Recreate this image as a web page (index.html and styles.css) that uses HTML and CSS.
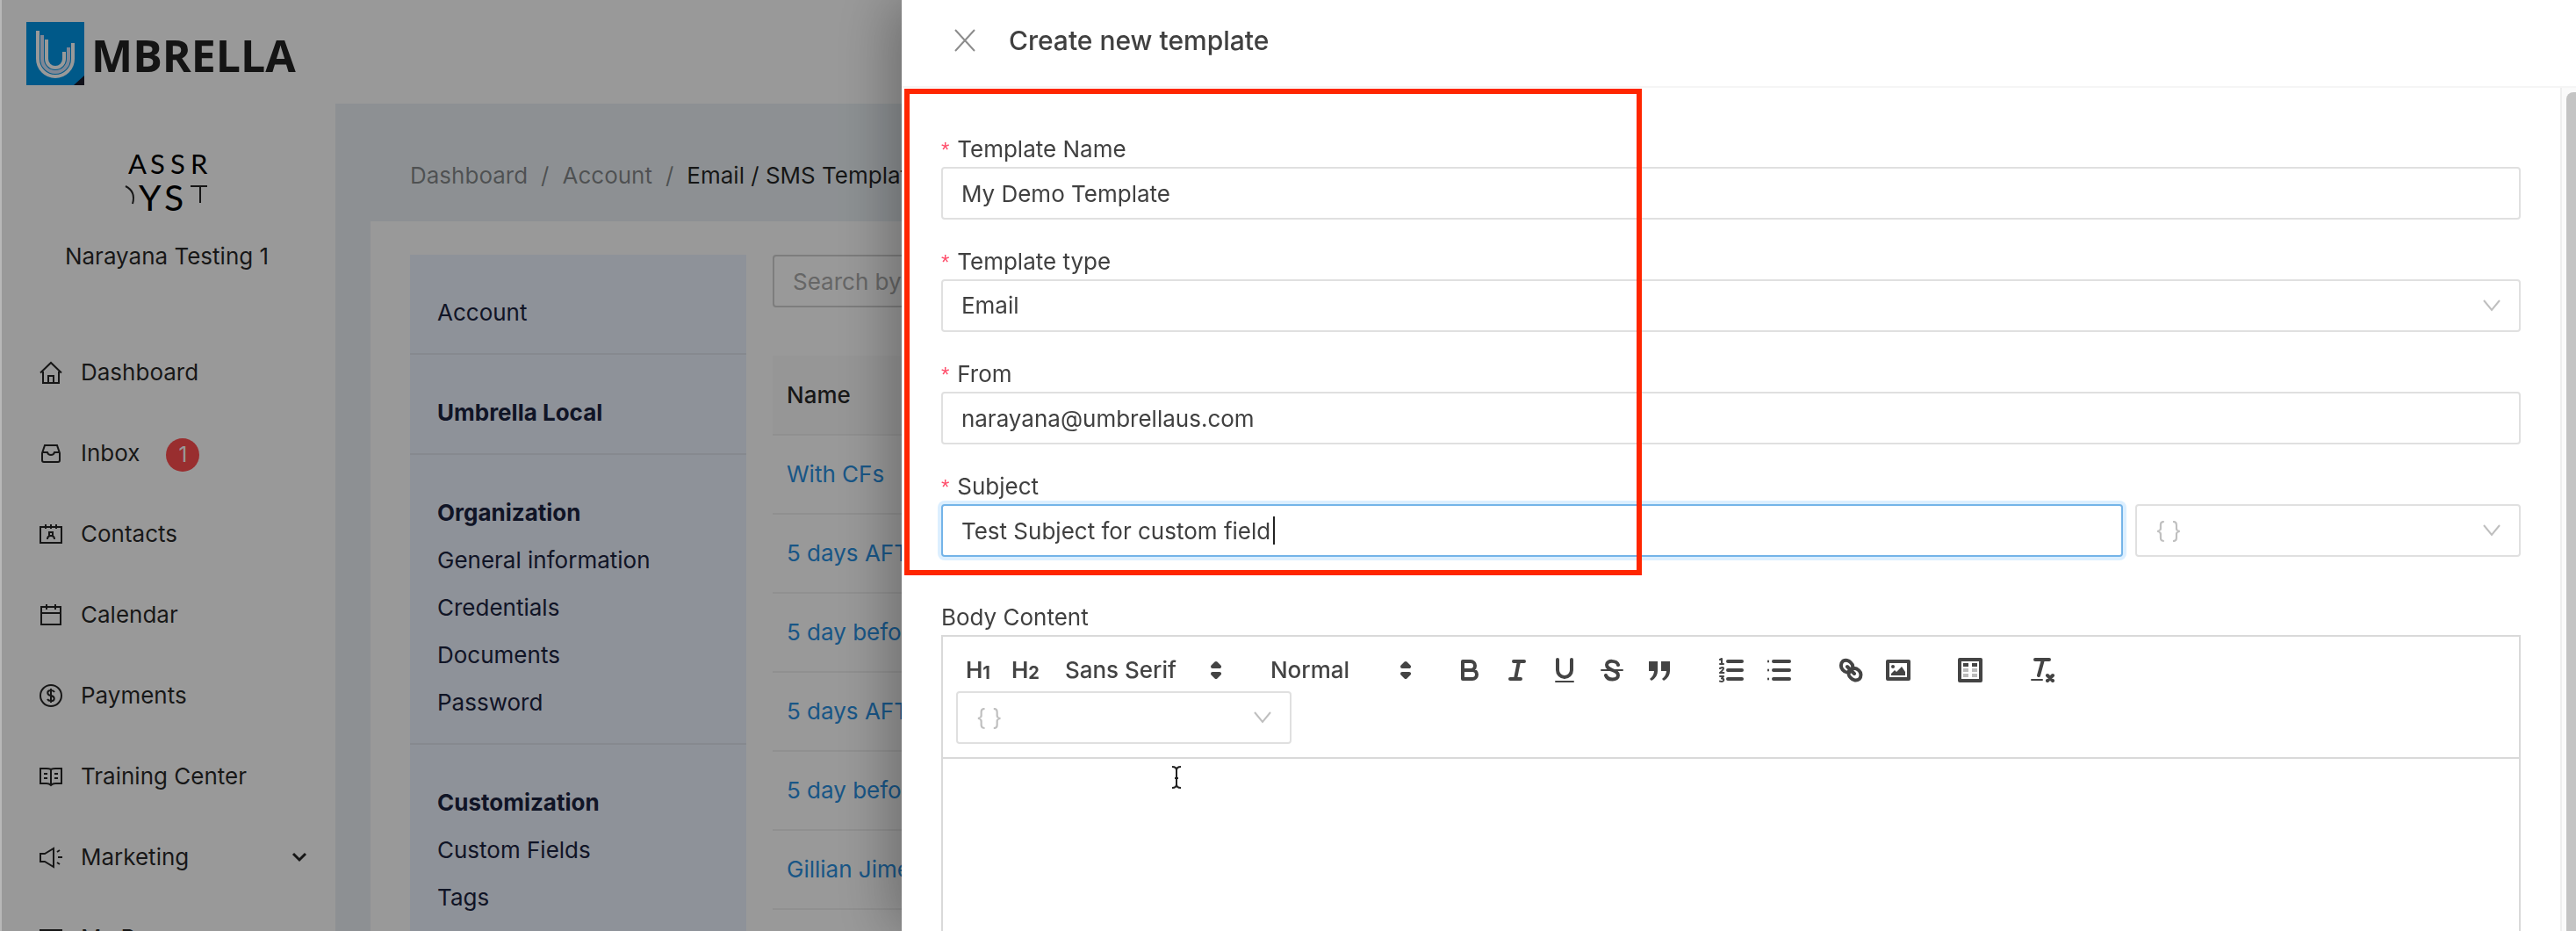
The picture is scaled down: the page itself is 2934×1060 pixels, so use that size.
FILE: index.html
```html
<!DOCTYPE html>
<html lang="en">
    <head>
        <meta charset="utf-8">
        <title>Umbrella - Email / SMS Templates</title>
        <link rel="stylesheet" href="styles.css">
    </head>
    <body>
        <div class="app">
            <header class="topbar">
                <svg class="logo-mark" viewBox="0 0 66 72">
                    <rect width="66" height="72" fill="#0095e4"/>
                    <path d="M66 61V72H54z" fill="#1d1d2c"/>
                    <g fill="none" stroke="#fff" stroke-width="4">
                        <path d="M13 10V42a20 20 0 0 0 40 0V24"/>
                        <path d="M18 15V42a15 15 0 0 0 30 0V29" stroke="#d5e2f8"/>
                        <path d="M23 20V42a10 10 0 0 0 20 0V34"/>
                    </g>
                </svg>
                <span class="logo-text">MBRELLA</span>
            </header>

            <aside class="sidebar">
                <div class="org">
                    <svg class="org-logo" viewBox="0 0 96 68" stroke="#000" stroke-width="2">
                        <text x="4" y="24" class="org-word">A</text>
                        <text x="29" y="24" class="org-word">S</text>
                        <text x="52" y="24" class="org-word">S</text>
                        <text x="75" y="24" class="org-word">R</text>
                        <path d="M1 38q12 6 8 20"/>
                        <text x="16" y="66" class="org-word-big">Y</text>
                        <text x="45" y="66" class="org-word-big">S</text>
                        <path d="M75 38h19M86 38v19"/>
                    </svg>
                    <div>Narayana Testing 1</div>
                </div>
                <nav class="nav">
                    <a href="#">
                        <svg viewBox="0 0 28 28"><path d="M2 14.500 14 3l12 11.500M5 13v13h18V13M11 26v-8h6v8"/></svg>
                        Dashboard
                    </a>
                    <a href="#">
                        <svg viewBox="0 0 28 28"><path d="M7 5h14l3 9v8a2 2 0 0 1-2 2H6a2 2 0 0 1-2-2v-8zM4 13h6c1 4 7 4 8 0h6"/></svg>
                        Inbox <span class="count">1</span>
                    </a>
                    <a href="#">
                        <svg viewBox="0 0 28 28"><path d="M2 6h24v18H2zM8 3v5M14 3v5M20 3v5M10 20q0-4 4-4t4 4M12 12h4v4h-4z"/></svg>
                        Contacts
                    </a>
                    <a href="#">
                        <svg viewBox="0 0 28 28"><path d="M3 5h22v20H3zM3 12h22M9 2v6M19 2v6"/></svg>
                        Calendar
                    </a>
                    <a href="#">
                        <svg viewBox="0 0 28 28"><circle cx="14" cy="14" r="12"/><path d="M18 10q-1-2-4-2c-5 0-5 5 0 6s5 6 0 6q-3 0-4-2M14 6v16"/></svg>
                        Payments
                    </a>
                    <a href="#">
                        <svg viewBox="0 0 28 28"><path d="M14 6q-2-1-5-1H2v17h7q3 0 5 2 2-2 5-2h7V5h-7q-3 0-5 1zv17M6 11h4M6 16h4M18 11h4M18 16h4"/></svg>
                        Training Center
                    </a>
                    <a href="#">
                        <svg viewBox="0 0 28 28"><path d="M2 10h5l10-6v21L7 19H2zM21 8l3-2M22 14h5M21 20l3 2"/></svg>
                        Marketing
                        <svg class="arrow" viewBox="0 0 18 12"><path d="m2 2 7 7 7-7"/></svg>
                    </a>
                    <a href="#">
                        <svg viewBox="0 0 28 28"><path d="M2 5h24v18H2zM2 10h24"/></svg>
                        My Pages
                    </a>
                </nav>
            </aside>

            <main class="content">
                <div class="breadcrumb">
                    <a href="#">Dashboard</a><i>/</i><a href="#">Account</a><i>/</i><span>Email / SMS Templates</span>
                </div>
                <div class="card">
                    <nav class="settings">
                        <section><a href="#">Account</a></section>
                        <section><b>Umbrella Local</b></section>
                        <section>
                            <b>Organization</b>
                            <a href="#">General information</a>
                            <a href="#">Credentials</a>
                            <a href="#">Documents</a>
                            <a href="#">Password</a>
                        </section>
                        <section>
                            <b>Customization</b>
                            <a href="#">Custom Fields</a>
                            <a href="#">Tags</a>
                        </section>
                    </nav>
                    <div class="listing">
                        <input class="search" type="text" placeholder="Search by name" aria-label="Search by name">
                        <table class="templates">
                            <thead><tr><th>Name</th></tr></thead>
                            <tbody>
                                <tr><td><a href="#">With CFs</a></td></tr>
                                <tr><td><a href="#">5 days AFTER</a></td></tr>
                                <tr><td><a href="#">5 day before</a></td></tr>
                                <tr><td><a href="#">5 days AFTER</a></td></tr>
                                <tr><td><a href="#">5 day before</a></td></tr>
                                <tr><td><a href="#">Gillian Jimenez</a></td></tr>
                            </tbody>
                        </table>
                    </div>
                </div>
            </main>
        </div>

        <div class="mask"></div>

        <div class="drawer" role="dialog" aria-labelledby="drawer-title">
            <div class="drawer-header">
                <button class="close" type="button" aria-label="Close">
                    <svg viewBox="0 0 24 26"><path d="m1 1 22 24M23 1 1 25"/></svg>
                </button>
                <h1 id="drawer-title">Create new template</h1>
            </div>
            <form class="drawer-body">
                <div class="field">
                    <label class="required" for="name">Template Name</label>
                    <input id="name" type="text" value="My Demo Template">
                </div>
                <div class="field">
                    <label class="required" for="type">Template type</label>
                    <div class="select">
                        <select id="type"><option>Email</option><option>SMS</option></select>
                        <svg viewBox="0 0 22 16"><path d="m2 2 9 11 9-11"/></svg>
                    </div>
                </div>
                <div class="field">
                    <label class="required" for="from">From</label>
                    <input id="from" type="text" value="narayana@umbrellaus.com">
                </div>
                <div class="field">
                    <label class="required" for="subject">Subject</label>
                    <div class="subject-row">
                        <div class="focused">
                            <input id="subject" type="text" value="Test Subject for custom field">
                            <span class="text-caret"></span>
                        </div>
                        <div class="select empty">
                            <select aria-label="Insert custom field in subject"><option>{ }</option></select>
                            <svg viewBox="0 0 22 16"><path d="m2 2 9 11 9-11"/></svg>
                        </div>
                    </div>
                </div>

                <div class="body-field">
                    <label class="body-label" for="body">Body Content</label>
                    <div class="toolbar">
                        <div class="tools">
                            <div class="group headings">
                                <button type="button">H<small>1</small></button>
                                <button type="button">H<small>2</small></button>
                            </div>
                            <div class="picker font">
                                <select aria-label="Font"><option>Sans Serif</option></select>
                                <svg viewBox="0 0 18 18"><path d="M7 7 9 5l2 2zM7 11l2 2 2-2z"/></svg>
                            </div>
                            <div class="picker size">
                                <select aria-label="Text size"><option>Normal</option></select>
                                <svg viewBox="0 0 18 18"><path d="M7 7 9 5l2 2zM7 11l2 2 2-2z"/></svg>
                            </div>
                            <div class="group">
                                <button type="button" aria-label="Bold"><svg viewBox="0 0 18 18"><path d="M5 4h4.500a2.500 2.500 0 0 1 0 5H5zM5 9h5.500a2.500 2.500 0 0 1 0 5H5z"/></svg></button>
                                <button type="button" aria-label="Italic"><svg viewBox="0 0 18 18"><path d="M7 4h6M5 14h6M8 14l2-10"/></svg></button>
                                <button type="button" aria-label="Underline"><svg viewBox="0 0 18 18"><path d="M5 3v6a4 4 0 0 0 8 0V3"/><path class="thin" d="M4 15.500h10"/></svg></button>
                                <button type="button" aria-label="Strike"><svg viewBox="0 0 18 18"><path class="thin" d="M3 9h12"/><path d="M12.500 6C12 3.500 6 3 6 6c0 3.500 6.500 2.500 6.500 6 0 3-6 3-7 0"/></svg></button>
                                <button type="button" aria-label="Quote"><svg viewBox="0 0 18 18"><path class="solid" d="M3 4h5v5.500q0 3.500-3.500 5.500l-1-1Q6 12 6 9.500H3zM10 4h5v5.500q0 3.500-3.500 5.500l-1-1Q13 12 13 9.500h-3z"/></svg></button>
                            </div>
                            <div class="group">
                                <button type="button" aria-label="Ordered list"><svg viewBox="0 0 18 18"><path d="M7 4h8M7 9h8M7 14h8"/><path class="thin" d="m2.500 3 1-.5v3M2.500 5.500h2M2.500 8q2-1 2 0 0 .7-2 2.500h2.200M2.500 12.500h2l-1 1.200q1.500 0 1 1.300-.5.800-2 .3"/></svg></button>
                                <button type="button" aria-label="Bullet list"><svg viewBox="0 0 18 18"><path d="M6 4h9M6 9h9M6 14h9"/><path class="thin" d="M3 3.800v.4M3 8.800v.4M3 13.800v.4"/></svg></button>
                            </div>
                            <div class="group">
                                <button type="button" aria-label="Link"><svg viewBox="0 0 18 18"><path d="m7 7 4 4M8.900 4.600a3.500 3.500 0 0 1 .4 5l-.3.200A3.500 3.500 0 0 1 4.600 9 3.500 3.500 0 0 1 4.600 3.800 3.500 3.500 0 0 1 8.900 4.600zM13.400 9a3.500 3.500 0 0 1 .5 5A3.500 3.500 0 0 1 9 13.400 3.500 3.500 0 0 1 8.200 9 3.500 3.500 0 0 1 13.400 9z"/></svg></button>
                                <button type="button" aria-label="Image"><svg viewBox="0 0 18 18"><path d="M3 4h12v10H3z"/><circle class="solid" cx="6" cy="7" r="1"/><path class="solid" d="M5 12v-1l2-2 1 1 3-3 2 3v2z"/></svg></button>
                            </div>
                            <div class="group">
                                <button type="button" aria-label="Table"><svg viewBox="0 0 18 18"><path d="M3 3h12v12H3z"/><path class="solid" d="M5 5h3v2H5zM10 5h3v2h-3z"/><path class="pale" d="M5 8h3v2H5zM10 8h3v2h-3zM5 11h3v2H5zM10 11h3v2h-3z"/></svg></button>
                            </div>
                            <div class="group">
                                <button type="button" aria-label="Clear formatting"><svg viewBox="0 0 18 18"><path d="M5 3h8M9.500 3 7 12M12 12l3 3M15 12l-3 3"/><path class="thin" d="M3 14.500h6"/></svg></button>
                            </div>
                        </div>
                        <div class="select empty">
                            <select aria-label="Insert custom field in body"><option>{ }</option></select>
                            <svg viewBox="0 0 22 16"><path d="m2 2 9 11 9-11"/></svg>
                        </div>
                    </div>
                    <textarea class="editor" id="body"></textarea>
                </div>
            </form>
            <div class="scrollbar"><div class="thumb"></div></div>
        </div>

        <div class="highlight"></div>
        <svg class="cursor" viewBox="0 0 12 26"><path d="M1 1q5 0 5 4v16q0 4-5 4M11 1q-5 0-5 4v16q0 4 5 4M4 14h4"/></svg>
    </body>
</html>
```

FILE: styles.css
```css
* {
    box-sizing: border-box;
}

body {
    background: #fff;
    color: rgba(0, 0, 0, .85);
    font-family: Inter, "Liberation Sans", sans-serif;
    font-size: 26px;
    height: 100vh;
    line-height: 40px;
    margin: 0;
    overflow: hidden;
}

a {
    color: inherit;
    text-decoration: none;
}

input, select, textarea, button {
    color: inherit;
    font: inherit;
}

svg {
    fill: none;
    flex: none;
    stroke: currentColor;
}

/* page */

.app {
    border-left: 2px solid #b8b8b8;
    display: grid;
    grid-template-columns: 380px 1fr;
    grid-template-rows: 118px 1fr;
    height: 100vh;
    overflow: hidden;
}

.topbar {
    align-items: center;
    display: flex;
    gap: 8px;
    grid-column: 1 / 3;
    padding: 4px 28px 0;
}

.logo-mark {
    height: 72px;
    stroke: none;
    width: 66px;
}

.logo-text {
    color: #222;
    font-family: "Open Sans", sans-serif;
    font-size: 50px;
    font-weight: 700;
    padding-top: 4px;
}

.org {
    padding: 56px 4px 0 0;
    text-align: center;
}

.org-logo {
    display: block;
    height: 68px;
    margin: 0 auto 30px;
    overflow: visible;
    width: 96px;
}

.org-word, .org-word-big {
    fill: #000;
    font-family: Lato, sans-serif;
    font-size: 31px;
    stroke: none;
}

.org-word-big {
    font-size: 41px;
}

.nav {
    padding: 66px 32px 0 42px;
}

.nav a {
    align-items: center;
    display: flex;
    gap: 20px;
    height: 92px;
}

.nav svg {
    height: 28px;
    stroke-width: 2;
    width: 28px;
}

.nav .arrow {
    height: 12px;
    margin-left: auto;
    stroke-width: 3;
    width: 18px;
}

.count {
    background: #ff4d4f;
    border-radius: 50%;
    color: #fff;
    font-size: 24px;
    height: 38px;
    line-height: 38px;
    margin: 4px 0 0 10px;
    text-align: center;
    width: 38px;
}

.content {
    background: #ebf1f5;
    min-width: 0;
    padding: 0 40px;
}

.breadcrumb {
    color: rgba(0, 0, 0, .45);
    height: 134px;
    line-height: 164px;
    padding-left: 45px;
    white-space: nowrap;
}

.breadcrumb i {
    font-style: normal;
    margin: 0 15px;
}

.breadcrumb span {
    color: rgba(0, 0, 0, .85);
}

.card {
    background: #fff;
    display: flex;
    gap: 30px;
    height: 100%;
    padding: 38px 45px;
}

.settings {
    background: #edf3ff;
    color: #1c2340;
    flex: none;
    width: 383px;
}

.settings section {
    border-bottom: 2px solid #e0e5ee;
    display: flex;
    flex-direction: column;
    gap: 14px;
    padding: 46px 31px 26px;
}

.settings b {
    font-weight: 700;
}

.listing {
    flex: 1;
}

.search {
    border: 2px solid #d0d0d0;
    border-radius: 4px;
    display: block;
    height: 60px;
    padding: 0 21px;
    width: 500px;
}

.search::placeholder {
    color: #aaa;
}

.templates {
    border-collapse: collapse;
    margin-top: 55px;
    width: 100%;
}

.templates th, .templates td {
    border-bottom: 2px solid #f0f0f0;
    height: 90px;
    padding: 0 16px;
    text-align: left;
}

.templates th {
    background: #fafafa;
    font-weight: 500;
}

.templates td {
    color: #2a8fe0;
}

/* drawer */

.mask {
    background: rgba(0, 0, 0, .4);
    inset: 0 0 0 2px;
    position: fixed;
}

.drawer {
    background: #fff;
    bottom: 0;
    box-shadow: -12px 0 60px rgba(0, 0, 0, .3);
    color: #404040;
    display: flex;
    flex-direction: column;
    position: fixed;
    right: 0;
    top: 0;
    width: 65%;
}

.drawer-header {
    align-items: center;
    border-bottom: 2px solid #f5f5f5;
    display: flex;
    flex: none;
    gap: 38px;
    height: 100px;
    padding: 0 60px 6px;
}

.drawer-header h1 {
    font-size: 30px;
    font-weight: 500;
    margin: 0;
}

.close {
    background: none;
    border: 0;
    color: #8c8c8c;
    display: flex;
    padding: 0;
}

.close svg {
    height: 26px;
    stroke-width: 2;
    width: 24px;
}

.drawer-body {
    display: flex;
    flex: 1;
    flex-direction: column;
    gap: 28px;
    min-height: 0;
    overflow: hidden;
    padding: 50px 63px 0 45px;
}

.field label {
    display: block;
    height: 40px;
}

.required::before {
    color: #ff4d6a;
    content: "*";
    font-family: "Liberation Sans", sans-serif;
    font-size: 24px;
    line-height: 1;
    margin-right: 9px;
}

.field input, .select {
    background: #fff;
    border: 2px solid #e0e0e0;
    border-radius: 4px;
    display: block;
    height: 60px;
    width: 100%;
}

.field input {
    outline: 0;
    padding: 0 21px;
}

.select {
    align-items: center;
    display: flex;
    position: relative;
}

.select select {
    appearance: none;
    background: none;
    border: 0;
    height: 100%;
    padding: 0 21px;
    width: 100%;
}

.select svg {
    color: #bfbfbf;
    height: 16px;
    pointer-events: none;
    position: absolute;
    right: 20px;
    stroke-width: 2;
    width: 22px;
}

.empty {
    color: #bfbfbf;
}

.subject-row {
    display: grid;
    gap: 14px;
    grid-template-columns: 1347fr 439fr;
}

.focused {
    position: relative;
}

.focused input {
    border-color: #74b4e8;
    box-shadow: 0 0 0 4px #dcefff;
}

.text-caret {
    background: #222;
    height: 32px;
    left: 378px;
    position: absolute;
    top: 14px;
    width: 2px;
}

.body-field {
    flex: none;
    padding-top: 21px;
}

.body-label {
    display: block;
}

.toolbar {
    border: 2px solid #d9d9d9;
    padding: 14px 15px 15px;
}

.tools {
    align-items: center;
    color: #444;
    display: flex;
    height: 48px;
}

.group {
    display: flex;
    margin-right: 28px;
}

.tools button {
    align-items: center;
    background: none;
    border: 0;
    display: flex;
    height: 48px;
    justify-content: center;
    padding: 0;
    width: 54px;
}

.tools svg {
    height: 36px;
    stroke-linecap: round;
    stroke-linejoin: round;
    stroke-width: 2;
    width: 36px;
}

.tools .thin {
    stroke-width: 1;
}

.tools .solid {
    fill: currentColor;
    stroke: none;
}

.tools .pale {
    fill: #bbb;
    stroke: none;
}

.headings {
    font-weight: 600;
    margin: 0;
}

.headings button {
    padding-right: 4px;
}

.headings small {
    font-size: 20px;
    font-weight: 700;
    padding-top: 6px;
}

.picker {
    align-items: center;
    display: flex;
    margin-right: 28px;
    position: relative;
}

.picker select {
    appearance: none;
    background: none;
    border: 0;
    font-weight: 500;
    padding: 0 16px;
    width: 100%;
}

.picker svg {
    fill: currentColor;
    pointer-events: none;
    position: absolute;
    right: 0;
}

.font {
    width: 206px;
}

.size {
    width: 188px;
}

.toolbar .empty {
    width: 382px;
}

.editor {
    border: 2px solid #d9d9d9;
    border-top: 0;
    display: block;
    height: 400px;
    outline: 0;
    padding: 24px 30px;
    resize: none;
    width: 100%;
}

.scrollbar {
    background: #fafafa;
    border-left: 2px solid #eee;
    bottom: 0;
    position: absolute;
    right: 0;
    top: 100px;
    width: 18px;
}

.thumb {
    background: #c4c4c4;
    border-radius: 8px 0 0;
    height: 100%;
    margin: 5px 0 0 5px;
}

/* overlays */

.highlight {
    border: 6px solid #ff2600;
    height: 554px;
    left: 1030px;
    position: fixed;
    top: 101px;
    width: 840px;
}

.cursor {
    color: #222;
    height: 26px;
    left: 1334px;
    position: fixed;
    stroke-width: 2;
    top: 872px;
    width: 12px;
}
```
